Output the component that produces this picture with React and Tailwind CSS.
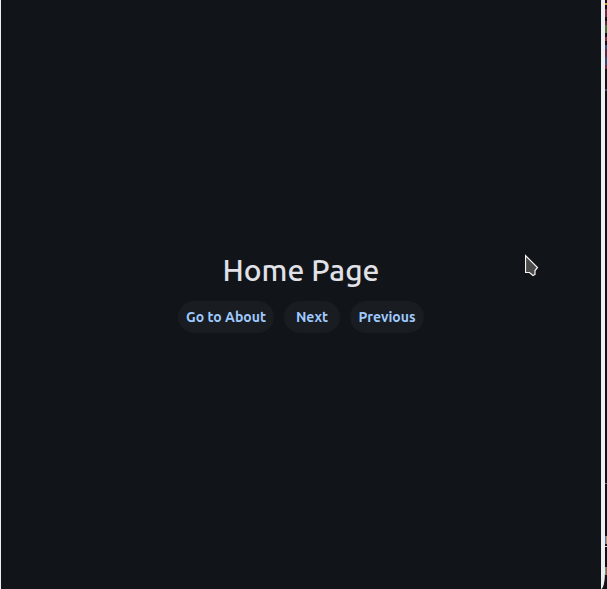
const links = [
  { label: 'Go to About', size: 'w-24' },
  { label: 'Next', size: 'w-14' },
  { label: 'Previous', size: 'w-[74px]' },
];

// Slivers of the editor window that show beside the app window.
const slivers = [
  { id: 'a', style: 'mt-[3px] h-0.5 bg-[#c9a51b]' },
  { id: 'b', style: 'mt-1 h-2 bg-[#6b2d42]' },
  { id: 'c', style: 'mt-1 h-1 bg-[#582b3c]' },
  { id: 'd', style: 'h-2 bg-[#3f7136]' },
  { id: 'e', style: 'mt-1 h-1 bg-[#703345]' },
  { id: 'f', style: 'mt-1 h-1 bg-[#28517a]' },
  { id: 'g', style: 'h-2 bg-[#542e42]' },
  { id: 'h', style: 'h-2 bg-[#294c70]' },
  { id: 'i', style: 'h-1 bg-[#682e42]' },
  { id: 'j', style: 'mt-5 h-0.5 bg-[#31465f]' },
];

function Pointer() {
  return (
    <svg
      className="absolute left-[525px] top-[254px]"
      width="14"
      height="23"
      viewBox="0 0 14 23"
      aria-hidden="true"
    >
      <path
        d="M.5 1.5v17h4l3.5 3 2-1v-4l2.5-3z"
        fill="#4b4b4b"
        stroke="#f4f4f4"
        strokeWidth="1.2"
      />
    </svg>
  );
}

export default function App() {
  return (
    <div className="relative flex min-h-screen bg-[#101316] font-['Ubuntu','Noto_Sans',sans-serif]">
      <main className="flex flex-1 flex-col items-center justify-center gap-3 border-l border-[#eceef2] bg-[#111418] pb-1.5">
        <h1 className="text-[30px] leading-[38px] font-medium text-[#e1e2e8]">Home Page</h1>
        <nav className="flex gap-2.5">
          {links.map(({ label, size }) => (
            <button
              key={label}
              type="button"
              className={`${size} h-8 rounded-full bg-[#191c20] text-sm font-semibold whitespace-nowrap text-[#9fcaff]`}
            >
              {label}
            </button>
          ))}
        </nav>
      </main>
      <div className="w-1 rounded-br-[4px_16px] bg-[#eceef2]" />
      <div className="flex w-0.5 flex-col">
        {slivers.map(({ id, style }) => (
          <span key={id} className={style} />
        ))}
        <span className="mt-auto h-px bg-[#6d7175]" />
        <span className="mt-[52px] h-2 bg-linear-to-r from-[#3458b7] to-[#d5a43c]" />
        <span className="mt-0.5 h-px bg-[#d5d7da]" />
        <span className="mt-5 h-2 bg-linear-to-r from-[#50ad91] to-[#a34435]" />
        <span className="h-3.5" />
      </div>
      <Pointer />
    </div>
  );
}
